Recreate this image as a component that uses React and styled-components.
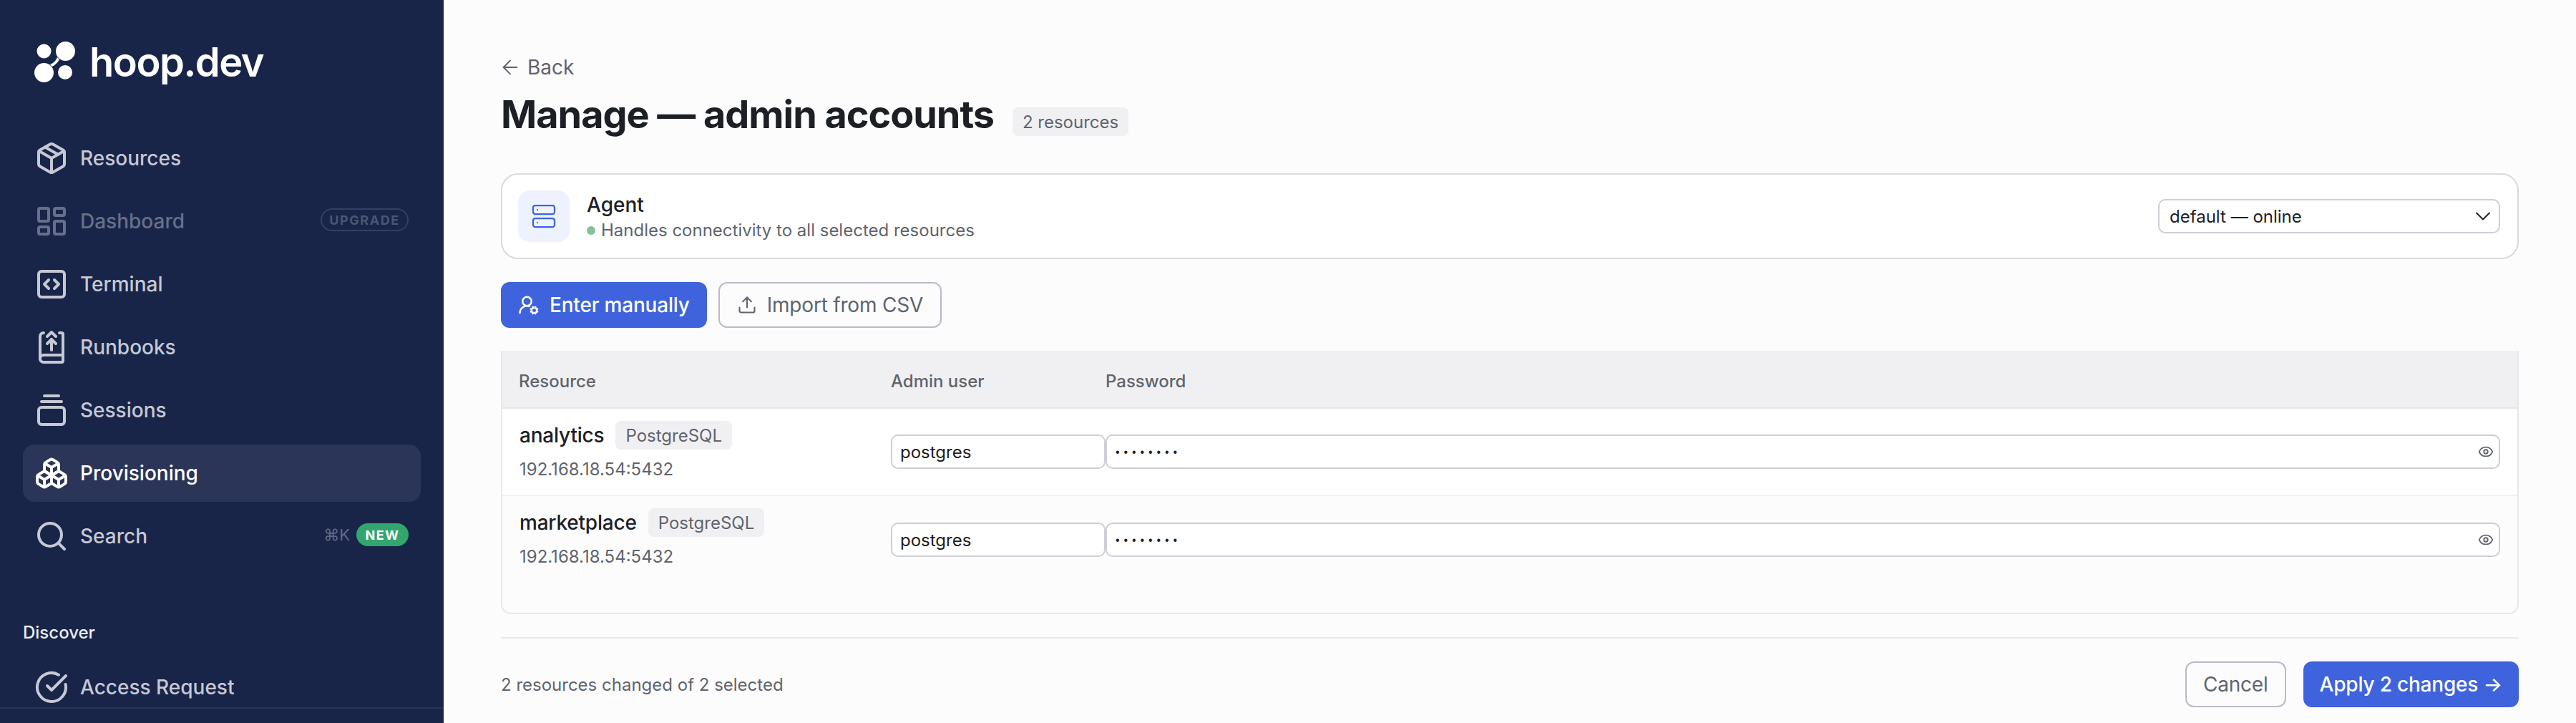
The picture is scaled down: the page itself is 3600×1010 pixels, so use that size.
import React from "react";
import styled, { createGlobalStyle } from "styled-components";
import {
  ArrowLeft,
  Boxes,
  ChevronDown,
  CircleCheckBig,
  Eye,
  GalleryVerticalEnd,
  LayoutDashboard,
  Package,
  Search,
  Server,
  SquareCode,
  Upload,
  UserRoundCog,
} from "lucide-react";

const GlobalStyle = createGlobalStyle`
  * { box-sizing: border-box; }
  html, body { margin: 0; padding: 0; background: #fcfcfd; }
  body { font-family: Inter, "Liberation Sans", sans-serif; color: #1c2024; }
`;

const Page = styled.div`
  display: flex;
  width: 3600px;
  height: 1010px;
  overflow: hidden;
`;

const Sidebar = styled.aside`
  position: relative;
  flex: 0 0 620px;
  height: 100%;
  background: #182549;
  padding: 0 32px;
  overflow: hidden;
`;

const Brand = styled.div`
  display: flex;
  align-items: center;
  gap: 20px;
  height: 57px;
  margin: 58px 0 66px 16px;
  color: #fff;
  font-size: 56px;
  line-height: 54px;
  font-weight: 600;
  letter-spacing: -1.5px;
`;

const Nav = styled.nav`
  display: flex;
  flex-direction: column;
  gap: 8px;
`;

const NavRow = styled.div`
  display: flex;
  align-items: center;
  gap: 16px;
  height: 80px;
  padding: 0 17px 0 16px;
  border-radius: 16px;
  font-size: 28px;
  font-weight: 500;
  color: ${(p) => (p.$active ? "#fff" : p.$muted ? "#686f8b" : "#c6c8d3")};
  background: ${(p) => (p.$active ? "#2b3557" : "transparent")};
`;

const NavLabel = styled.span`
  flex: 1;
`;

const Pill = styled.span`
  display: inline-flex;
  align-items: center;
  justify-content: center;
  height: 32px;
  margin-top: -4px;
  border-radius: 16px;
  font-size: 18px;
  font-weight: 700;
  letter-spacing: 1.6px;
`;

const UpgradePill = styled(Pill)`
  width: 123px;
  border: 2px solid #333f63;
  color: #4b5674;
`;

const NewPill = styled(Pill)`
  width: 73px;
  background: #33a56e;
  color: #fff;
`;

const Shortcut = styled.span`
  margin: -4px -7px 0 0;
  font-size: 22px;
  font-weight: 400;
  color: #636a85;
`;

const SectionTitle = styled.div`
  margin: 80px 0 21px;
  height: 30px;
  line-height: 30px;
  font-size: 24px;
  font-weight: 500;
  color: #eceef3;
`;

const SidebarFooter = styled.div`
  position: absolute;
  left: 0;
  right: 0;
  bottom: 0;
  height: 22px;
  background: #182549;
  border-top: 2px solid #27335a;
`;

const Main = styled.main`
  flex: 1;
  min-width: 0;
  padding: 78px 80px 0;
`;

const BackLink = styled.div`
  display: flex;
  align-items: center;
  gap: 8px;
  height: 32px;
  margin-left: -3px;
  font-size: 28px;
  color: #60646c;
`;

const TitleRow = styled.div`
  display: flex;
  align-items: center;
  gap: 26px;
  height: 64px;
  margin-top: 18px;
`;

const Title = styled.h1`
  margin: 0;
  font-size: 54px;
  line-height: 64px;
  font-weight: 700;
  letter-spacing: -1.05px;
  color: #1c2024;
`;

const Tag = styled.span`
  display: inline-flex;
  align-items: center;
  height: 40px;
  padding: 0 14px;
  border-radius: 8px;
  background: #f0f0f3;
  font-size: 24px;
  letter-spacing: 0;
  font-weight: 400;
  color: #60646c;
`;

const CountTag = styled(Tag)`
  margin-top: 20px;
`;

const AgentCard = styled.section`
  display: flex;
  align-items: center;
  gap: 24px;
  height: 120px;
  margin-top: 50px;
  padding: 0 24px 0 22px;
  background: #fff;
  border: 2px solid #d9d9e0;
  border-radius: 24px;
`;

const AgentIcon = styled.div`
  display: flex;
  align-items: center;
  justify-content: center;
  flex: 0 0 72px;
  height: 72px;
  border-radius: 16px;
  background: #edf2fe;
  color: #3e63dd;
`;

const AgentText = styled.div`
  flex: 1;
`;

const AgentName = styled.div`
  font-size: 28px;
  line-height: 40px;
  font-weight: 500;
`;

const AgentNote = styled.div`
  display: flex;
  align-items: center;
  gap: 8px;
  font-size: 24px;
  line-height: 32px;
  color: #60646c;
`;

const StatusDot = styled.span`
  width: 12px;
  height: 12px;
  border-radius: 50%;
  background: #7fc39b;
`;

const SelectWrap = styled.div`
  position: relative;
  width: 478px;
  height: 48px;
  color: #1c2024;

  svg {
    position: absolute;
    top: 6px;
    right: 6px;
    pointer-events: none;
  }
`;

const Select = styled.select`
  appearance: none;
  width: 100%;
  height: 100%;
  padding: 0 14px;
  background: #fff;
  border: 2px solid #cdced6;
  border-radius: 10px;
  font: inherit;
  font-size: 24px;
  color: #1c2024;
`;

const Modes = styled.div`
  display: flex;
  gap: 16px;
  margin-top: 32px;
`;

const Button = styled.button`
  display: inline-flex;
  align-items: center;
  gap: 14px;
  height: 64px;
  padding: 0 ${(p) => (p.$tight ? 23 : 24)}px;
  border-radius: 12px;
  font-family: inherit;
  font-size: 28px;
  font-weight: ${(p) => (p.$primary ? 500 : 400)};
  letter-spacing: -0.2px;
  white-space: nowrap;
  background: ${(p) => (p.$primary ? "#3f63dd" : "transparent")};
  color: ${(p) => (p.$primary ? "#fff" : "#60646c")};
  border: ${(p) => (p.$primary ? "0" : "2px solid #b9bbc6")};
`;

const Table = styled.section`
  height: 368px;
  margin-top: 32px;
  border-radius: 0 0 14px 14px;
  border: 2px solid #e8e8ec;
  border-top: 0;
  overflow: hidden;
`;

const HeaderRow = styled.div`
  display: grid;
  grid-template-columns: 543px 300px 1fr;
  align-items: center;
  height: 81px;
  margin: 0 -2px;
  padding: 6px 0 0 2px;
  background: #f0f0f3;
  border-bottom: 2px solid #e6e6ea;
  font-size: 24px;
  font-weight: 500;
  color: #60646c;
`;

const HeaderResource = styled.div`
  padding-left: 23px;
`;

const Row = styled.div`
  display: grid;
  grid-template-columns: 543px 300px 1fr;
  align-items: center;
  height: 122px;
  padding-right: 24px;
  background: ${(p) => (p.$white ? "#fff" : "transparent")};
  border-bottom: ${(p) => (p.$white ? "2px solid #f0f0f3" : "0")};
`;

const ResourceCell = styled.div`
  align-self: start;
  padding: 17px 0 0 24px;
`;

const ResourceName = styled.div`
  display: flex;
  align-items: center;
  gap: 16px;
  height: 40px;
  font-size: 28px;
  font-weight: 500;
  letter-spacing: -0.2px;
  color: #1c2024;
`;

const ResourceAddr = styled.div`
  margin-top: 12px;
  font-size: 24px;
  line-height: 32px;
  color: #60646c;
`;

const Field = styled.div`
  position: relative;
  height: 48px;

  svg {
    position: absolute;
    top: 13px;
    right: 9px;
    color: #60646c;
  }
`;

const Input = styled.input`
  width: 100%;
  height: 100%;
  padding: 0 11px;
  background: #fff;
  border: 2px solid #cdced6;
  border-radius: 10px;
  font-family: inherit;
  font-size: 24px;
  color: #1c2024;
  outline: none;
`;

const SecretInput = styled(Input)`
  padding: 2px 12px 0;
  font-family: "Liberation Sans", sans-serif;
  font-size: 16px;
  letter-spacing: 5.9px;
`;

const Footer = styled.footer`
  display: flex;
  align-items: center;
  gap: 24px;
  height: 98px;
  margin-top: 32px;
  padding-top: 32px;
  border-top: 2px solid #e8e8ec;
`;

const FooterNote = styled.div`
  flex: 1;
  font-size: 24px;
  color: #60646c;
`;

const HoopLogo = () => (
  <svg width="57" height="57" viewBox="0 0 57 57" fill="#fff">
    <circle cx="13.5" cy="13.5" r="10" />
    <circle cx="43.5" cy="13.5" r="13.5" />
    <circle cx="13.5" cy="43.5" r="13.5" />
    <circle cx="43" cy="43" r="10" />
    <path d="M32 22 C30 27 27 30 22 32 L25 35 C29 33 33 29 35 25 Z" />
  </svg>
);

const RunbookIcon = (props) => (
  <svg
    width="48"
    height="48"
    viewBox="0 0 24 24"
    fill="none"
    stroke="currentColor"
    strokeWidth="2"
    strokeLinecap="round"
    strokeLinejoin="round"
    {...props}
  >
    <path d="M6.5 2C5 2 4 3 4 4.5V20" />
    <path d="M17.5 2H19a1 1 0 0 1 1 1V21.5a1 1 0 0 1-1 1H6.5A2.5 2.5 0 0 1 4 20v0A2.5 2.5 0 0 1 6.5 17.5H20" />
    <path d="M9 4.5l3-3 3 3" />
    <path d="M9 9.5l3-3 3 3" />
    <path d="M12 6.5V14" />
  </svg>
);

const iconProps = { size: 48, strokeWidth: 2 };

const resources = [
  { name: "analytics", white: true },
  { name: "marketplace", white: false },
];

const App = () => (
  <Page>
    <GlobalStyle />
    <Sidebar>
      <Brand>
        <HoopLogo />
        hoop.dev
      </Brand>
      <Nav>
        <NavRow>
          <Package {...iconProps} />
          <NavLabel>Resources</NavLabel>
        </NavRow>
        <NavRow $muted>
          <LayoutDashboard {...iconProps} />
          <NavLabel>Dashboard</NavLabel>
          <UpgradePill>UPGRADE</UpgradePill>
        </NavRow>
        <NavRow>
          <SquareCode {...iconProps} />
          <NavLabel>Terminal</NavLabel>
        </NavRow>
        <NavRow>
          <RunbookIcon />
          <NavLabel>Runbooks</NavLabel>
        </NavRow>
        <NavRow>
          <GalleryVerticalEnd {...iconProps} />
          <NavLabel>Sessions</NavLabel>
        </NavRow>
        <NavRow $active>
          <Boxes {...iconProps} />
          <NavLabel>Provisioning</NavLabel>
        </NavRow>
        <NavRow>
          <Search {...iconProps} />
          <NavLabel>Search</NavLabel>
          <Shortcut>⌘K</Shortcut>
          <NewPill>NEW</NewPill>
        </NavRow>
      </Nav>
      <SectionTitle>Discover</SectionTitle>
      <NavRow>
        <CircleCheckBig {...iconProps} />
        <NavLabel>Access Request</NavLabel>
      </NavRow>
      <SidebarFooter />
    </Sidebar>

    <Main>
      <BackLink>
        <ArrowLeft size={32} strokeWidth={1.5} />
        Back
      </BackLink>
      <TitleRow>
        <Title>Manage — admin accounts</Title>
        <CountTag>2 resources</CountTag>
      </TitleRow>

      <AgentCard>
        <AgentIcon>
          <Server size={36} strokeWidth={1.5} />
        </AgentIcon>
        <AgentText>
          <AgentName>Agent</AgentName>
          <AgentNote>
            <StatusDot />
            Handles connectivity to all selected resources
          </AgentNote>
        </AgentText>
        <SelectWrap>
          <Select defaultValue="default">
            <option value="default">default — online</option>
          </Select>
          <ChevronDown size={36} strokeWidth={1.3} />
        </SelectWrap>
      </AgentCard>

      <Modes>
        <Button $primary>
          <UserRoundCog size={30} strokeWidth={2} />
          Enter manually
        </Button>
        <Button>
          <Upload size={28} strokeWidth={1.8} />
          Import from CSV
        </Button>
      </Modes>

      <Table>
        <HeaderRow>
          <HeaderResource>Resource</HeaderResource>
          <div>Admin user</div>
          <div>Password</div>
        </HeaderRow>
        {resources.map((r) => (
          <Row key={r.name} $white={r.white}>
            <ResourceCell>
              <ResourceName>
                {r.name}
                <Tag>PostgreSQL</Tag>
              </ResourceName>
              <ResourceAddr>192.168.18.54:5432</ResourceAddr>
            </ResourceCell>
            <Field>
              <Input readOnly value="postgres" />
            </Field>
            <Field>
              <SecretInput readOnly type="password" value="postgres" />
              <Eye size={22} strokeWidth={2} />
            </Field>
          </Row>
        ))}
      </Table>

      <Footer>
        <FooterNote>2 resources changed of 2 selected</FooterNote>
        <Button $tight>Cancel</Button>
        <Button $primary $tight>Apply 2 changes →</Button>
      </Footer>
    </Main>
  </Page>
);

export default App;
